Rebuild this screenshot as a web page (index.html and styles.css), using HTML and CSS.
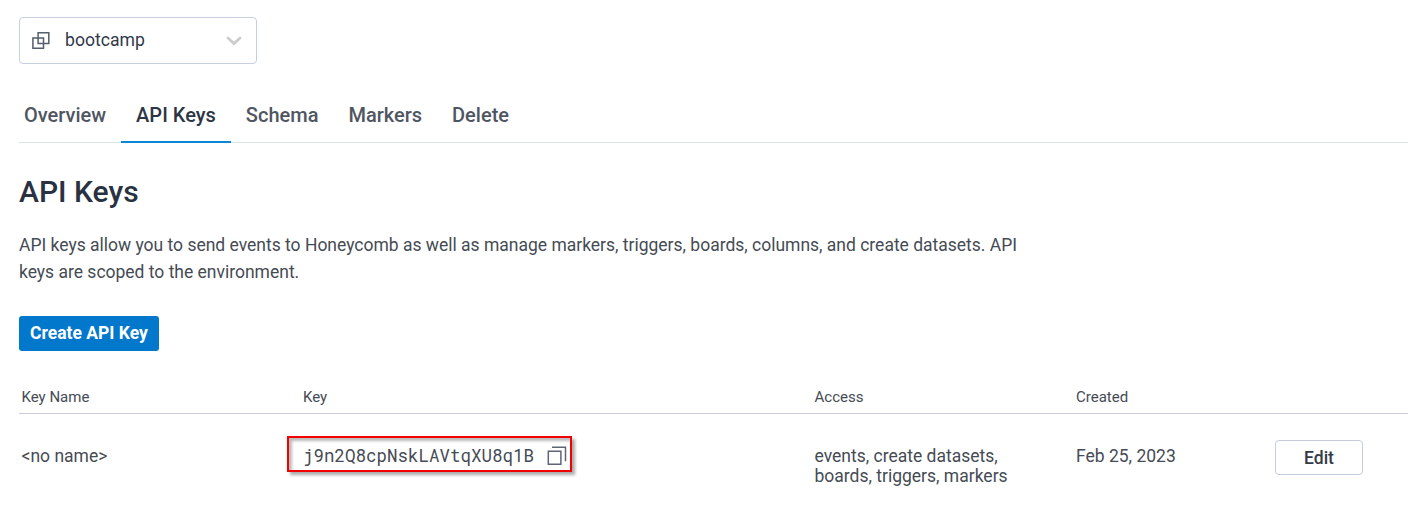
FILE: index.html
```html
<!DOCTYPE html>
<html lang="en">
<head>
<meta charset="utf-8">
<title>API Keys</title>
<link rel="stylesheet" href="styles.css">
</head>
<body>
<main class="page">
  <button class="env-picker">
    <svg class="env-icon" width="20" height="21" viewBox="0 0 20 21"><path d="M1.9 7.9h10.6v10.4H1.9zM7.1 2.8h10.7v10.6H7.1z"/></svg>
    <span class="env-name">bootcamp</span>
    <svg class="chevron" width="16" height="10" viewBox="0 0 16 10"><path d="M2 2l6 5.6L14 2"/></svg>
  </button>
  <nav class="tabs">
    <a class="tab tab-overview">Overview</a>
    <a class="tab tab-active">API Keys</a>
    <a class="tab">Schema</a>
    <a class="tab">Markers</a>
    <a class="tab">Delete</a>
  </nav>
  <h1 class="title">API Keys</h1>
  <p class="intro">API keys allow you to send events to Honeycomb as well as manage markers, triggers, boards, columns, and create datasets. API<br>keys are scoped to the environment.</p>
  <button class="create">Create API Key</button>
  <section class="keys">
    <div class="row head">
      <span>Key Name</span><span>Key</span><span>Access</span><span>Created</span><span></span>
    </div>
    <div class="row item">
      <span class="cell">&lt;no name&gt;</span>
      <div class="key-box">
        <code class="key">j9n2Q8cpNskLAVtqXU8q1B</code>
        <svg class="copy" width="20" height="20" viewBox="0 0 20 20"><path d="M1.3 5.2h12.6v13H1.3zM5 1.2h13.5v14"/></svg>
      </div>
      <span class="cell access">events, create datasets,<br>boards, triggers, markers</span>
      <span class="cell created">Feb 25, 2023</span>
      <button class="edit">Edit</button>
    </div>
  </section>
</main>
</body>
</html>
```
FILE: styles.css
```css
* { box-sizing: border-box; }
body { margin: 0; background: #fff; color: #454b54; font-family: Roboto, sans-serif; overflow: hidden; }
button { font-family: inherit; margin: 0; }
svg { fill: none; flex: none; }
.page { padding: 17px 0 0 19px; }
.env-picker { display: flex; align-items: center; width: 238px; height: 47px; padding: 0 14px 0 11px; border: 1px solid #c5cfdf; border-radius: 4px; background: #fff; }
.env-icon { stroke: #555e6b; stroke-width: 1.5; }
.env-name { flex: 1; margin-left: 14px; text-align: left; font-size: 17.6px; line-height: 20px; color: #303a49; padding-bottom: 2px; }
.chevron { margin-top: 1px; stroke: #ccc; stroke-width: 2.7; stroke-linecap: round; }
.tabs { display: flex; height: 79px; padding-top: 28px; border-bottom: 1px solid #dce2eb; }
.tab { height: 51px; padding: 11px 15px 0; font-size: 20px; line-height: 24px; font-weight: 500; color: #4f5661; }
.tab-overview { padding-left: 5px; }
.tab-active { color: #2c3645; border-bottom: 2px solid #0a87d8; }
.title { margin: 29px 0 0; font-size: 30px; line-height: 40px; font-weight: 500; color: #283241; }
.intro { margin: 20px 0 0; font-size: 17.5px; line-height: 27px; letter-spacing: -0.008px; white-space: nowrap; }
.create { display: block; width: 140px; height: 35px; margin-top: 30px; padding: 0 0 2px; border: 0; border-radius: 3px; background: #0278cd; color: #fff; font-size: 17.5px; font-weight: 700; }
.keys { margin-top: 31px; }
.row { display: grid; grid-template-columns: 281.5px 511.5px 261.5px 199px 1fr; padding-left: 2.5px; }
.head { height: 32px; padding-top: 5px; border-bottom: 1px solid #c8ccd8; font-size: 15px; line-height: 20px; }
.item { padding-top: 22px; align-items: start; }
.cell { padding-top: 10px; font-size: 17.5px; line-height: 20px; white-space: nowrap; }
.key-box { display: flex; align-items: center; width: 285px; height: 36px; margin-left: -16px; padding-left: 14px; border: 2px solid #f20000; box-shadow: 3px 3px 3px #aaa, inset 3px 3px 3px #bbb; }
.key { width: 231px; padding-top: 4px; font-family: "Roboto Mono", "DejaVu Sans Mono", monospace; font-size: 17.5px; line-height: 20px; }
.copy { margin-left: 13px; margin-top: 4px; stroke: #5d6577; stroke-width: 1.5; }
.edit { width: 88px; height: 35px; margin-top: 4px; padding: 0; border: 1px solid #c5cce0; border-radius: 4px; background: #fff; color: #343b46; font-size: 17.5px; font-weight: 500; }
```
